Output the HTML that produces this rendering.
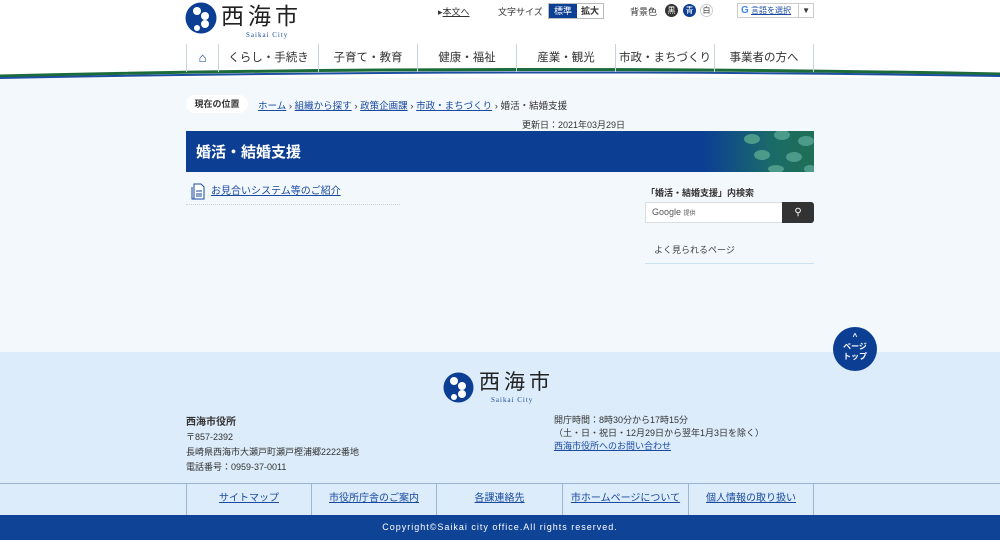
<!DOCTYPE html>
<html><head><meta charset="utf-8"><style>
*{margin:0;padding:0;box-sizing:border-box}
body{width:1000px;height:540px;overflow:hidden;background:#f3f8fd;font-family:"Liberation Sans","Noto Sans CJK JP",sans-serif;color:#333;position:relative}
.abs{position:absolute}
a{color:#1a4aa0;text-decoration:underline}
.nav div{position:absolute;top:44px;height:28px;border-left:1px solid #c8d3e0;font-size:11.5px;color:#333;text-align:center;line-height:28px;white-space:nowrap}
.fl div{position:absolute;top:483px;height:32px;border-left:1px solid #9ab6d6;font-size:10px;text-align:center;line-height:32px}
</style></head><body>
<div class="abs" style="left:0;top:0;width:1000px;height:78px;background:#fff"></div>
<svg class="abs" style="left:0;top:66px" width="1000" height="16"><path d="M0 10 Q500 -2 1000 8" stroke="#1c6b3a" stroke-width="3" fill="none"/><path d="M0 12 Q500 2 1000 10" stroke="#1d4fa0" stroke-width="2" fill="none"/></svg>
<!-- logo -->
<svg class="abs" style="left:185px;top:2px" width="32" height="32"><circle cx="16" cy="16" r="15.5" fill="#0c3f94"/><circle cx="12" cy="9" r="4" fill="#fff"/><circle cx="20" cy="14" r="4" fill="#fff"/><circle cx="20" cy="22" r="4" fill="#fff"/><circle cx="12" cy="26" r="3" fill="#fff"/></svg>
<div class="abs" style="left:221px;top:3px;font-size:23px;letter-spacing:4px;color:#222;line-height:26px">西海市</div>
<div class="abs" style="left:246px;top:31px;font-size:7px;color:#1a4aa0;font-family:'Liberation Serif',serif;letter-spacing:1px">Saikai City</div>
<div class="abs" style="left:438px;top:5px;font-size:9px">▸<a style="color:#333">本文へ</a></div>
<div class="abs" style="left:498px;top:5px;font-size:9px">文字サイズ</div>
<div class="abs" style="left:548px;top:3px;width:56px;height:16px;border:1px solid #bbb;font-size:9px;line-height:14px;background:#fff"><span style="display:inline-block;width:28px;background:#0c3f94;color:#fff;text-align:center">標準</span><span style="display:inline-block;width:26px;text-align:center;font-weight:bold">拡大</span></div>
<div class="abs" style="left:630px;top:5px;font-size:9px">背景色</div>
<div class="abs" style="left:665px;top:4px;width:13px;height:13px;border-radius:50%;background:#333;color:#fff;font-size:8px;text-align:center;line-height:13px">黒</div>
<div class="abs" style="left:683px;top:4px;width:13px;height:13px;border-radius:50%;background:#0c3f94;color:#fff;font-size:8px;text-align:center;line-height:13px">青</div>
<div class="abs" style="left:700px;top:4px;width:13px;height:13px;border-radius:50%;border:1px solid #ccc;font-size:8px;text-align:center;line-height:11px">白</div>
<div class="abs" style="left:737px;top:3px;width:77px;height:15px;border:1px solid #ccc;font-size:8px;line-height:13px;background:#fff;padding-left:3px"><b style="color:#4285f4;font-size:10px">G</b> <a>言語を選択</a> <span style="float:right;border-left:1px solid #ccc;padding:0 3px">▼</span></div>
<div class="nav">
<div style="left:186px;width:32px;color:#0c3f94;font-size:13px">⌂</div>
<div style="left:218px;width:100px">くらし・手続き</div>
<div style="left:318px;width:99px">子育て・教育</div>
<div style="left:417px;width:99px">健康・福祉</div>
<div style="left:516px;width:99px">産業・観光</div>
<div style="left:615px;width:99px">市政・まちづくり</div>
<div style="left:714px;width:100px;border-right:1px solid #c8d3e0">事業者の方へ</div>
</div>
<!-- breadcrumb -->
<div class="abs" style="left:186px;top:95px;width:62px;height:18px;background:#fff;border-radius:9px;font-size:9px;font-weight:bold;text-align:center;line-height:18px">現在の位置</div>
<div class="abs" style="left:258px;top:98px;font-size:9.5px"><a>ホーム</a> › <a>組織から探す</a> › <a>政策企画課</a> › <a>市政・まちづくり</a> › 婚活・結婚支援</div>
<div class="abs" style="left:522px;top:118px;font-size:9px">更新日：2021年03月29日</div>
<div class="abs" style="left:186px;top:131px;width:628px;height:41px;background:#0c3f94;overflow:hidden">
<div style="position:absolute;left:10px;top:10px;color:#fff;font-size:15px;font-weight:bold">婚活・結婚支援</div>
<div style="position:absolute;right:0;top:0;width:110px;height:41px;background:linear-gradient(90deg,#0c3f94,#1a6a6a 60%,#1f6f55)"></div>
<svg style="position:absolute;right:0;top:0" width="80" height="41"><g fill="#4c9a8a"><ellipse cx="18" cy="8" rx="8" ry="5"/><ellipse cx="48" cy="4" rx="8" ry="5"/><ellipse cx="72" cy="10" rx="8" ry="5"/><ellipse cx="28" cy="24" rx="8" ry="5"/><ellipse cx="60" cy="26" rx="8" ry="5"/><ellipse cx="42" cy="38" rx="8" ry="4"/><ellipse cx="76" cy="38" rx="6" ry="4"/></g></svg>
</div>
<svg class="abs" style="left:191px;top:183px" width="14" height="17"><path d="M3 1h7l3 3v12H3z" fill="#fff" stroke="#1a4aa0"/><path d="M1 4v12h2" stroke="#1a4aa0" fill="none"/><path d="M5 8h6M5 11h6M5 13h6" stroke="#1a4aa0"/></svg>
<div class="abs" style="left:211px;top:182px;font-size:10px"><a>お見合いシステム等のご紹介</a></div>
<div class="abs" style="left:186px;top:204px;width:214px;border-top:1px dotted #c8d0da"></div>
<div class="abs" style="left:646px;top:186px;font-size:9px;font-weight:bold">「婚活・結婚支援」内検索</div>
<div class="abs" style="left:645px;top:202px;width:138px;height:21px;background:#fff;border:1px solid #ddd;font-size:9px;line-height:19px;padding-left:6px;color:#555">Google <span style="font-size:6px">提供</span></div>
<div class="abs" style="left:782px;top:202px;width:32px;height:21px;background:#333;border-radius:0 3px 3px 0;color:#fff;font-size:10px;text-align:center;line-height:21px">⚲</div>
<div class="abs" style="left:654px;top:243px;font-size:9px;color:#444">よく見られるページ</div>
<div class="abs" style="left:645px;top:263px;width:169px;border-top:1px solid #cbe2f3"></div>
<!-- footer -->
<div class="abs" style="left:0;top:352px;width:1000px;height:188px;background:#dcecfa"></div>
<div class="abs" style="left:833px;top:327px;width:44px;height:44px;border-radius:50%;background:#0c3f94;color:#fff;font-size:8px;font-weight:bold;text-align:center;line-height:10px;padding-top:5px">^<br>ページ<br>トップ</div>
<svg class="abs" style="left:443px;top:372px" width="31" height="31"><circle cx="15.5" cy="15.5" r="15" fill="#0c3f94"/><circle cx="11" cy="9" r="4" fill="#fff"/><circle cx="19" cy="14" r="4" fill="#fff"/><circle cx="19" cy="22" r="4" fill="#fff"/><circle cx="11" cy="25" r="3" fill="#fff"/></svg>
<div class="abs" style="left:479px;top:371px;font-size:21px;letter-spacing:4px;color:#222;line-height:24px">西海市</div>
<div class="abs" style="left:491px;top:396px;font-size:7px;color:#1a4aa0;font-family:'Liberation Serif',serif;letter-spacing:1px">Saikai City</div>
<div class="abs" style="left:186px;top:415px;font-size:10px;line-height:15px;font-size:9px"><b style="font-size:10px">西海市役所</b><br>〒857-2392<br>長崎県西海市大瀬戸町瀬戸樫浦郷2222番地<br>電話番号：0959-37-0011</div>
<div class="abs" style="left:554px;top:414px;font-size:9px;line-height:13px">開庁時間：8時30分から17時15分<br>（土・日・祝日・12月29日から翌年1月3日を除く）<br><a>西海市役所へのお問い合わせ</a></div>
<div class="abs" style="left:0;top:483px;width:1000px;border-top:1px solid #9ab6d6"></div>
<div class="fl">
<div style="left:186px;width:125px"><a>サイトマップ</a></div>
<div style="left:311px;width:125px"><a>市役所庁舎のご案内</a></div>
<div style="left:436px;width:126px"><a>各課連絡先</a></div>
<div style="left:562px;width:126px"><a>市ホームページについて</a></div>
<div style="left:688px;width:126px;border-right:1px solid #9ab6d6"><a>個人情報の取り扱い</a></div>
</div>
<div class="abs" style="left:0;top:515px;width:1000px;height:25px;background:#0f4396;color:#fff;font-size:9px;text-align:center;line-height:24px;letter-spacing:1px">Copyright©Saikai city office.All rights reserved.</div>
</body></html>
